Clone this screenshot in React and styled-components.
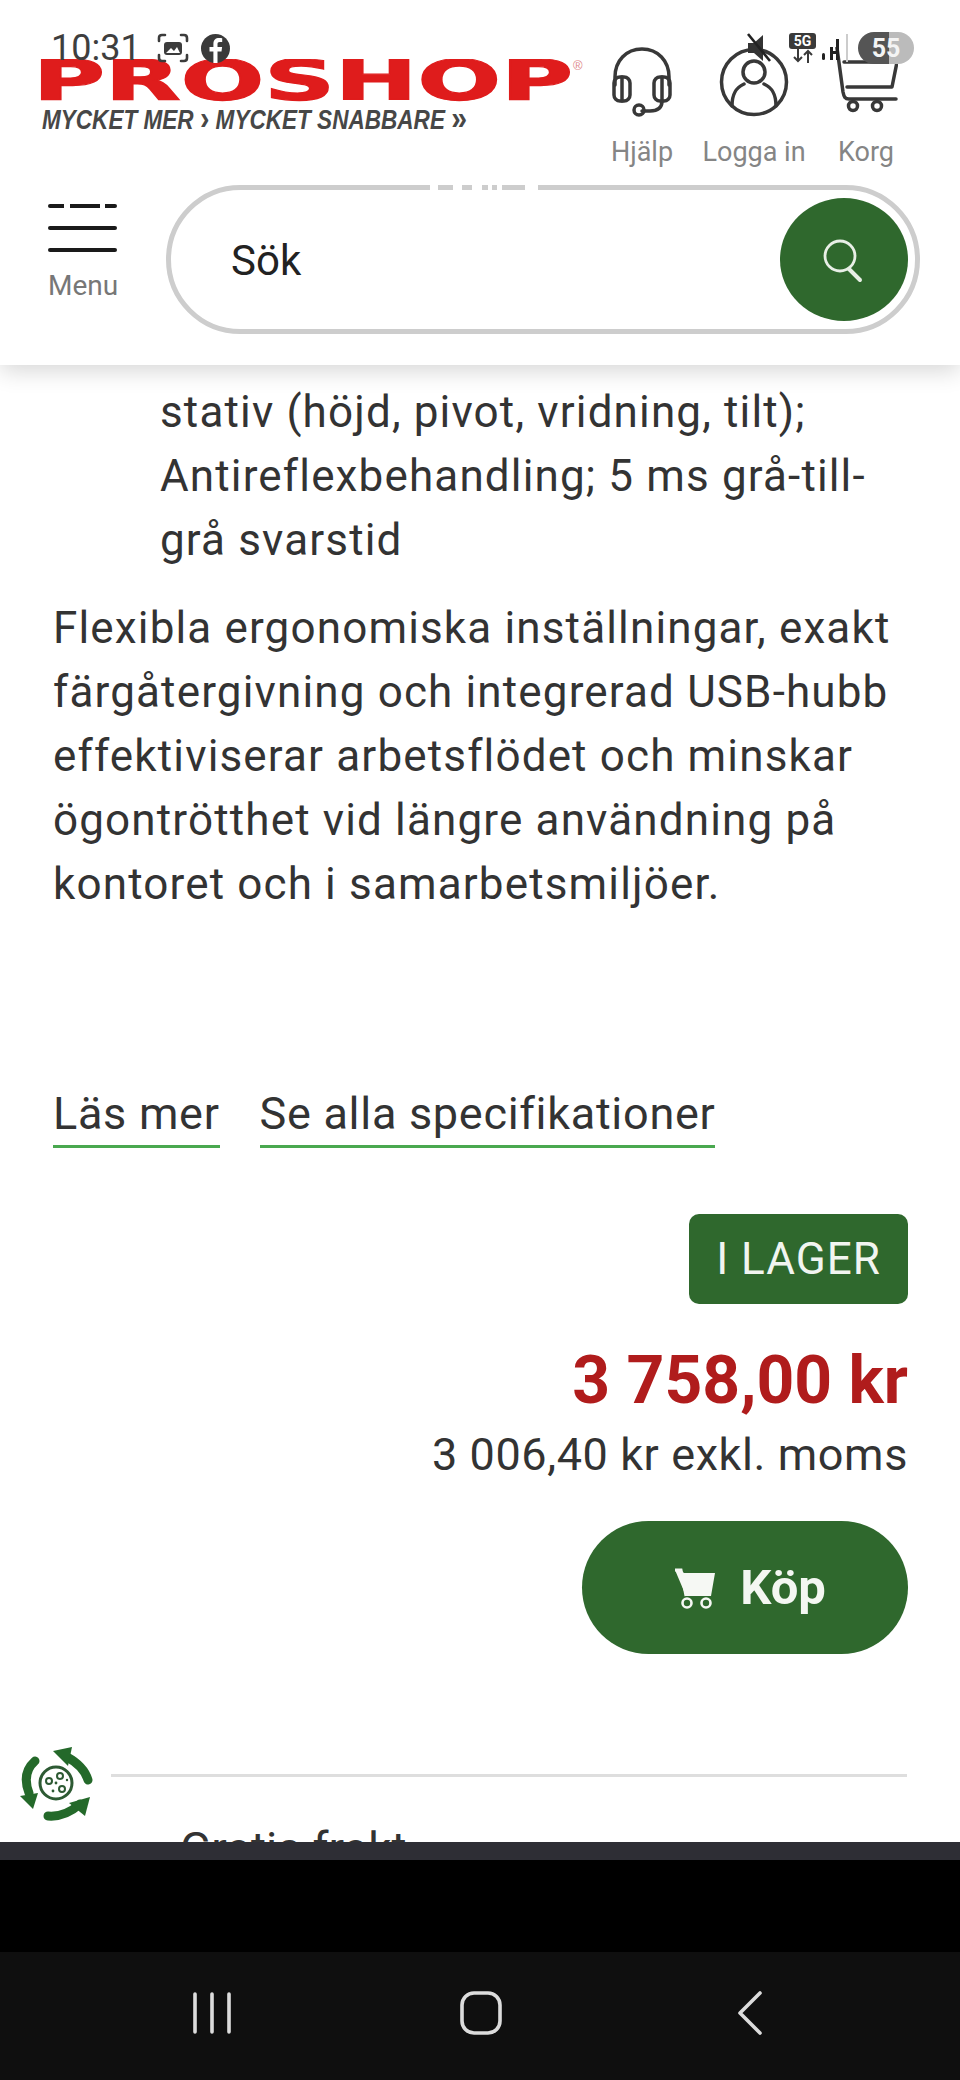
import React from "react";
import styled, { createGlobalStyle } from "styled-components";

const Global = createGlobalStyle`
  html, body { margin: 0; padding: 0; background: #fff; }
  #root { width: 960px; height: 2080px; }
  * { box-sizing: border-box; }
`;

const Phone = styled.div`
  position: relative;
  width: 960px;
  height: 2080px;
  display: flex;
  flex-direction: column;
  overflow: hidden;
  background: #fff;
  font-family: Roboto, "Liberation Sans", sans-serif;
  color: #333;
`;

/* status bar */
const StatusBar = styled.div`
  position: absolute;
  z-index: 5;
  top: 32px;
  left: 51px;
  right: 46px;
  height: 32px;
  display: flex;
  align-items: center;
  justify-content: space-between;
`;
const StatusLeft = styled.div`
  display: flex;
  align-items: center;
  gap: 12px;
`;
const Clock = styled.span`
  font-size: 36px;
  line-height: 32px;
  color: #3e3e3e;
  margin-right: 4px;
`;
const StatusRight = styled.div`
  display: flex;
  align-items: center;
`;
const FiveG = styled.div`
  display: flex;
  flex-direction: column;
  align-items: center;
  margin: 0 6px 0 18px;
`;
const FiveGTag = styled.span`
  background: #3a3a3a;
  color: #fff;
  font-size: 14px;
  line-height: 16px;
  font-weight: 700;
  width: 27px;
  text-align: center;
  border-radius: 3px;
`;
const Separator = styled.span`
  width: 2px;
  height: 28px;
  background: #ccc;
  margin: 0 10px 0 6px;
`;
const Battery = styled.div`
  width: 56px;
  height: 32px;
  border-radius: 16px;
  display: flex;
  align-items: center;
  justify-content: center;
  background: linear-gradient(90deg, #555 0 55%, #bbb 55% 100%);
  color: #f4f4f4;
  font-size: 25px;
  font-weight: 700;
`;

/* header */
const Header = styled.header`
  position: relative;
  z-index: 2;
  flex: 0 0 365px;
  display: flex;
  flex-direction: column;
  background: #fff;
  padding-top: 47px;
  box-shadow: 0 6px 22px rgba(0, 0, 0, 0.16);
`;
const TopRow = styled.div`
  display: flex;
  justify-content: space-between;
  padding: 0 40px;
  height: 138px;
`;
const LogoWrap = styled.div`
  padding-top: 12px;
`;
const Actions = styled.nav`
  display: flex;
`;
const Action = styled.div`
  width: 112px;
  display: flex;
  flex-direction: column;
  align-items: center;
`;
const ActionIcon = styled.div`
  height: 70px;
  display: flex;
  align-items: flex-start;
`;
const ActionLabel = styled.span`
  margin-top: 20px;
  font-size: 27px;
  line-height: 30px;
  color: #858585;
`;
const SearchRow = styled.div`
  display: flex;
  align-items: flex-start;
  gap: 49px;
  padding: 0 40px 0 48px;
`;
const MenuBlock = styled.div`
  width: 69px;
  padding-top: 19px;
  display: flex;
  flex-direction: column;
`;
const MenuLine = styled.span`
  display: block;
  height: 4px;
  margin-bottom: 18px;
  border-radius: 2px;
  background: ${(p) =>
    p.$broken
      ? "linear-gradient(90deg, #1a1a1a 0 16px, transparent 16px 22px, #1a1a1a 22px 52px, transparent 52px 57px, #1a1a1a 57px 69px)"
      : "#1a1a1a"};
`;
const MenuLabel = styled.span`
  margin-top: 1px;
  font-size: 28px;
  line-height: 30px;
  color: #777;
`;
const SearchPill = styled.div`
  position: relative;
  flex: 1;
  height: 149px;
  border: 5px solid #cdcdcd;
  border-radius: 75px;
  display: flex;
  align-items: center;
  justify-content: space-between;
  padding: 0 7px 0 60px;
`;
const SearchText = styled.span`
  font-size: 42px;
  padding-top: 2px;
  color: #222;
`;
const SearchButton = styled.div`
  width: 128px;
  height: 123px;
  border-radius: 50%;
  background: #2f682d;
  display: flex;
  align-items: center;
  justify-content: center;
`;
const BorderNicks = styled.span`
  position: absolute;
  top: -5px;
  left: 259px;
  width: 108px;
  height: 5px;
  background: linear-gradient(
    90deg,
    #fff 0 8px,
    transparent 8px 23px,
    #fff 23px 32px,
    transparent 32px 42px,
    #fff 42px 52px,
    transparent 52px 58px,
    #fff 58px 62px,
    transparent 62px 67px,
    #fff 67px 72px,
    transparent 72px 95px,
    #fff 95px 108px
  );
`;

/* content */
const Main = styled.main`
  flex: 1;
  min-height: 0;
  overflow: hidden;
  padding: 15px 53px 0;
  display: flex;
  flex-direction: column;
`;
const Body = styled.p`
  margin: 0;
  font-size: 44px;
  line-height: 64px;
  letter-spacing: 1.15px;
  color: #333;
`;
const BulletText = styled(Body)`
  padding-left: 107px;
  margin-bottom: 24px;
`;
const Links = styled.div`
  display: flex;
  gap: 40px;
  margin-top: 169px;
`;
const TextLink = styled.span`
  font-size: 45px;
  line-height: 58px;
  letter-spacing: 0.7px;
  color: #333;
  padding-bottom: 2px;
  border-bottom: 3px solid #49a84f;
`;
const Buy = styled.div`
  margin-right: -1px;
  display: flex;
  flex-direction: column;
  align-items: flex-end;
`;
const StockBadge = styled.span`
  margin-top: 66px;
  width: 219px;
  height: 90px;
  background: #2f682d;
  color: #f1f5f0;
  border-radius: 10px;
  font-size: 44px;
  letter-spacing: 1px;
  display: flex;
  align-items: center;
  justify-content: center;
`;
const Price = styled.div`
  margin-top: 41px;
  font-size: 66px;
  line-height: 72px;
  font-weight: 700;
  color: #b01c1c;
`;
const NetPrice = styled.div`
  margin-top: 9px;
  font-size: 45px;
  line-height: 58px;
  letter-spacing: 0.6px;
  color: #333;
`;
const BuyButton = styled.div`
  margin-top: 37px;
  width: 326px;
  height: 133px;
  border-radius: 67px;
  background: #2f682d;
  color: #f4f7f2;
  font-size: 49px;
  font-weight: 700;
  display: flex;
  align-items: center;
  justify-content: center;
  gap: 24px;
  padding-left: 10px;
`;
const Perks = styled.div`
  margin: 120px 0 0 -33px;
  display: grid;
  grid-template-columns: 58px 1fr;
  column-gap: 33px;
`;
const PerkIcon = styled.div`
  margin-top: -27px;
  height: 76px;
`;
const PerkBody = styled.div`
  border-top: 3px solid #dedede;
  padding: 46px 0 0 69px;
  font-size: 46px;
  line-height: 52px;
  color: #333;
`;

/* bottom */
const DarkStrip = styled.div`
  flex: 0 0 18px;
  background: #2e2e35;
`;
const BlackBand = styled.div`
  flex: 0 0 92px;
  background: #000;
`;
const NavBar = styled.div`
  flex: 0 0 128px;
  background: #0f0f0f;
  display: flex;
  justify-content: center;
  align-items: flex-start;
  gap: 209px;
  padding: 38px 0 0 2px;
`;
const NavSlot = styled.div`
  width: 60px;
  height: 46px;
  display: flex;
  align-items: center;
  justify-content: center;
`;

const Logo = () => (
  <svg width="546" height="74" viewBox="0 0 546 74" role="img" aria-label="Proshop">
    <text x="-7" y="40" fontFamily="DejaVu Sans" fontWeight="700" fontSize="55" textLength="540" lengthAdjust="spacingAndGlyphs" fill="#df1c1c" stroke="#df1c1c" strokeWidth="1.2">PROSHOP</text>
    <text x="533" y="11" fontFamily="Liberation Sans" fontSize="13" fill="#e08a8a">®</text>
    <text x="2" y="70" fontFamily="Liberation Sans" fontWeight="700" fontStyle="italic" fontSize="27" textLength="425" lengthAdjust="spacingAndGlyphs" fill="#474747">MYCKET MER <tspan fontSize="34" fontStyle="normal">›</tspan> MYCKET SNABBARE <tspan fontSize="34" fontStyle="normal">»</tspan></text>
  </svg>
);

const Headset = () => (
  <svg width="64" height="70" viewBox="0 0 64 70" fill="none" stroke="#383838" strokeWidth="3.5" strokeLinecap="round" strokeLinejoin="round">
    <path d="M5 38V30C5 14 16 2 32 2s27 12 27 28v8" />
    <rect x="4" y="30" width="16" height="24" rx="6" />
    <rect x="44" y="30" width="16" height="24" rx="6" />
    <path d="M12 30v24M52 30v24" />
    <path d="M52 54c0 8-6 10-12 10h-8" />
    <circle cx="29" cy="63" r="5" />
  </svg>
);
const Account = () => (
  <svg width="70" height="70" viewBox="0 0 70 70" fill="none" stroke="#383838" strokeWidth="3.5" strokeLinecap="round">
    <circle cx="35" cy="35" r="32.5" />
    <circle cx="35" cy="25" r="11" />
    <path d="M13 59c0-11 3-18 12-22M57 59c0-11-3-18-12-22" />
  </svg>
);
const HeaderCart = () => (
  <svg width="64" height="70" viewBox="0 0 64 70" fill="none" stroke="#383838" strokeWidth="3.5" strokeLinecap="round" strokeLinejoin="round">
    <path d="M3 1l6 44c1 5 2 7 6 7h47" />
    <path d="M10 15h53l-5 25H13" />
    <circle cx="19" cy="59" r="4.5" />
    <circle cx="43" cy="59" r="4.5" />
  </svg>
);
const SearchGlyph = () => (
  <svg width="44" height="46" viewBox="0 0 44 46" fill="none" stroke="#e8efe6" strokeWidth="2.8" strokeLinecap="round">
    <circle cx="18" cy="19" r="15" />
    <path d="M27 32l11 11" strokeWidth="4" />
  </svg>
);
const ShotIcon = () => (
  <svg width="32" height="30" viewBox="0 0 32 30" fill="none" stroke="#3c3c3c" strokeWidth="2.6" strokeLinecap="round">
    <path d="M2 8V5c0-2 1-3 3-3h3M24 2h3c2 0 3 1 3 3v3M2 22v3c0 2 1 3 3 3h3M24 28h3c2 0 3-1 3-3v-3" />
    <rect x="7" y="9" width="18" height="13" rx="3" fill="#3c3c3c" stroke="none" />
    <path d="M9 20l5-5 3 3 3-4 3 6z" fill="#fff" stroke="none" />
  </svg>
);
const Facebook = () => (
  <svg width="29" height="29" viewBox="0 0 29 29">
    <circle cx="14.5" cy="14.5" r="14.5" fill="#3a3a3a" />
    <path d="M16.5 29V17.5h4l.6-4.6h-4.6v-2.6c0-1.3.5-2.2 2.3-2.2h2.4V4.2c-1-.1-2-.2-3.2-.2-3.4 0-5.6 2-5.6 5.8v3.1H8.5v4.6h3.9V29z" fill="#fff" />
  </svg>
);
const Mute = () => (
  <svg width="24" height="30" viewBox="0 0 24 30">
    <path d="M1 10h6l9-8v26l-9-8H1z" fill="#333" />
    <path d="M1 1l22 27" stroke="#222" strokeWidth="2.6" />
  </svg>
);
const DataArrows = () => (
  <svg width="20" height="14" viewBox="0 0 20 14" fill="none" stroke="#3a3a3a" strokeWidth="2">
    <path d="M5 0v12M1 8l4 4 4-4M15 14V2M11 6l4-4 4 4" />
  </svg>
);
const Signal = () => (
  <svg width="18" height="30" viewBox="0 0 18 30" fill="#222">
    <rect x="0" y="20" width="3" height="7" rx="1.5" />
    <rect x="8" y="14" width="3" height="13" />
    <rect x="11" y="18" width="3" height="3" />
    <rect x="14" y="6" width="3" height="21" />
  </svg>
);
const BuyCart = () => (
  <svg width="42" height="42" viewBox="0 0 42 42">
    <path d="M1 3h6l3 3h31l-4 23H12z" fill="#f6f8f4" />
    <path d="M1 3h6l5 26" fill="none" stroke="#f6f8f4" strokeWidth="3" />
    <circle cx="13" cy="36" r="4.5" fill="none" stroke="#f6f8f4" strokeWidth="2.6" />
    <circle cx="32" cy="36" r="4.5" fill="none" stroke="#f6f8f4" strokeWidth="2.6" />
  </svg>
);
const Recycle = () => (
  <svg width="76" height="76" viewBox="0 0 76 76" fill="none">
    <g stroke="#24692a" strokeWidth="9" strokeLinecap="round">
      <path d="M68 33C65 23 58 16 47 10" />
      <path d="M15 14C6 22 4 33 9 46" />
      <path d="M28 69c12 1 23-4 32-12" />
    </g>
    <g fill="#24692a">
      <path d="M33 4l19-4-4 19z" />
      <path d="M0 49l18-3-5 16z" />
      <path d="M70 50l-21 6 16 13z" />
    </g>
    <circle cx="36" cy="36" r="16" stroke="#2d5a33" strokeWidth="3" />
    <circle cx="29" cy="34" r="3" stroke="#2d5a33" strokeWidth="2" />
    <circle cx="40" cy="29" r="3" stroke="#2d5a33" strokeWidth="2" />
    <circle cx="42" cy="42" r="3" stroke="#2d5a33" strokeWidth="2" />
    <circle cx="33" cy="44" r="1.4" fill="#2d5a33" />
    <circle cx="36" cy="36" r="1.4" fill="#2d5a33" />
    <circle cx="47" cy="33" r="1.2" fill="#2d5a33" />
  </svg>
);

export default function App() {
  return (
    <Phone>
      <Global />
      <StatusBar>
        <StatusLeft>
          <Clock>10:31</Clock>
          <ShotIcon />
          <Facebook />
        </StatusLeft>
        <StatusRight>
          <Mute />
          <FiveG>
            <FiveGTag>5G</FiveGTag>
            <DataArrows />
          </FiveG>
          <Signal />
          <Separator />
          <Battery>55</Battery>
        </StatusRight>
      </StatusBar>
      <Header>
        <TopRow>
          <LogoWrap><Logo /></LogoWrap>
          <Actions>
            <Action><ActionIcon><Headset /></ActionIcon><ActionLabel>Hjälp</ActionLabel></Action>
            <Action><ActionIcon><Account /></ActionIcon><ActionLabel>Logga in</ActionLabel></Action>
            <Action><ActionIcon><HeaderCart /></ActionIcon><ActionLabel>Korg</ActionLabel></Action>
          </Actions>
        </TopRow>
        <SearchRow>
          <MenuBlock>
            <MenuLine $broken />
            <MenuLine />
            <MenuLine />
            <MenuLabel>Menu</MenuLabel>
          </MenuBlock>
          <SearchPill>
            <BorderNicks />
            <SearchText>Sök</SearchText>
            <SearchButton><SearchGlyph /></SearchButton>
          </SearchPill>
        </SearchRow>
      </Header>
      <Main>
        <BulletText>stativ (höjd, pivot, vridning, tilt); Antireflexbehandling; 5 ms grå-till-grå svarstid</BulletText>
        <Body>Flexibla ergonomiska inställningar, exakt färgåtergivning och integrerad USB-hubb effektiviserar arbetsflödet och minskar ögontrötthet vid längre användning på kontoret och i samarbetsmiljöer.</Body>
        <Links>
          <TextLink>Läs mer</TextLink>
          <TextLink>Se alla specifikationer</TextLink>
        </Links>
        <Buy>
          <StockBadge>I LAGER</StockBadge>
          <Price>3 758,00 kr</Price>
          <NetPrice>3 006,40 kr exkl. moms</NetPrice>
          <BuyButton><BuyCart />Köp</BuyButton>
        </Buy>
        <Perks>
          <PerkIcon><Recycle /></PerkIcon>
          <PerkBody>Gratis frakt</PerkBody>
        </Perks>
      </Main>
      <DarkStrip />
      <BlackBand />
      <NavBar>
        <NavSlot>
          <svg width="42" height="42" viewBox="0 0 42 42" stroke="#dcdcdc" strokeWidth="3.6" strokeLinecap="round">
            <path d="M4 2v38M21 2v38M38 2v38" />
          </svg>
        </NavSlot>
        <NavSlot>
          <svg width="42" height="44" viewBox="0 0 42 44" fill="none" stroke="#dcdcdc" strokeWidth="3.6">
            <rect x="2" y="2" width="38" height="40" rx="12" />
          </svg>
        </NavSlot>
        <NavSlot>
          <svg width="26" height="44" viewBox="0 0 26 44" fill="none" stroke="#dcdcdc" strokeWidth="3.6" strokeLinecap="round" strokeLinejoin="round">
            <path d="M23 2L3 22l20 20" />
          </svg>
        </NavSlot>
      </NavBar>
    </Phone>
  );
}
